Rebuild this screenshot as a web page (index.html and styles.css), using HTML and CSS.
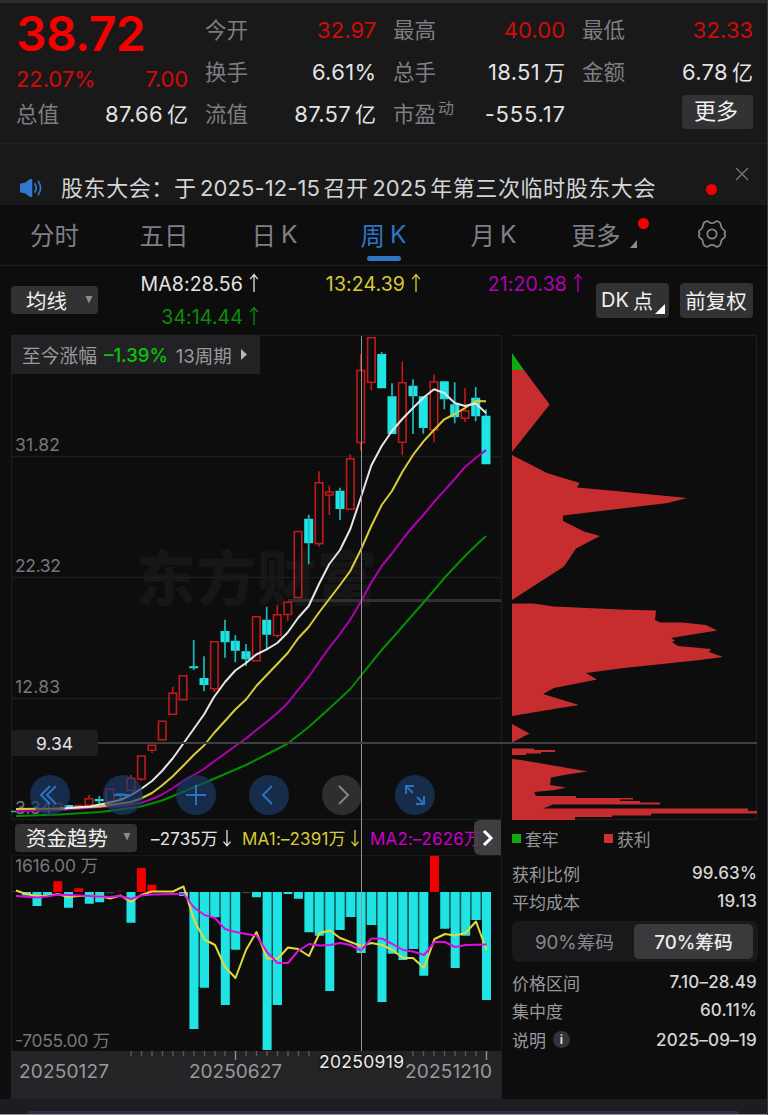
FILE: index.html
```html
<!DOCTYPE html>
<html lang="zh-CN">
<head>
<meta charset="utf-8">
<title>周K</title>
<link rel="stylesheet" href="styles.css">
</head>
<body>
<svg class="defs" width="0" height="0">
  <symbol id="up" viewBox="0 0 10 20"><path d="M5 19V2M1.2 6.2L5 1.6L8.8 6.2" fill="none" stroke="currentColor" stroke-width="1.3"/></symbol>
  <symbol id="down" viewBox="0 0 10 20"><path d="M5 2V17.500M1.5 13.6L5 17.800L8.500 13.6" fill="none" stroke="currentColor" stroke-width="1.3"/></symbol>
</svg>
<div class="app">
  <header class="quote">
    <div class="col first">
      <div class="price">38.72</div>
      <div class="row chg"><span class="red">22.07%</span><span class="red">7.00</span></div>
      <div class="row"><span class="k">总值</span><span class="v">87.66<i>亿</i></span></div>
    </div>
    <div class="col">
      <div class="row"><span class="k">今开</span><span class="v red">32.97</span></div>
      <div class="row"><span class="k">换手</span><span class="v">6.61%</span></div>
      <div class="row"><span class="k">流值</span><span class="v">87.57<i>亿</i></span></div>
    </div>
    <div class="col">
      <div class="row"><span class="k">最高</span><span class="v red">40.00</span></div>
      <div class="row"><span class="k">总手</span><span class="v">18.51<i>万</i></span></div>
      <div class="row"><span class="k">市盈<sup>动</sup></span><span class="v wide">-555.17</span></div>
    </div>
    <div class="col">
      <div class="row"><span class="k">最低</span><span class="v red">32.33</span></div>
      <div class="row"><span class="k">金额</span><span class="v">6.78<i>亿</i></span></div>
      <div class="row end"><span class="btn more">更多</span></div>
    </div>
  </header>

  <section class="notice">
    <svg class="speaker" width="24" height="20" viewBox="0 0 24 20"><path d="M1 6.5Q1 5.5 2 5.3L5.500 5L11 1.300Q13.300 0 13.300 2.500V17.500Q13.300 20 11 18.700L5.500 15L2 14.700Q1 14.500 1 13.500Z" fill="#2f78cd"/><path d="M16 6Q18.400 10 16 14M19.400 3.500Q23.800 10 19.400 16.500" fill="none" stroke="#2f78cd" stroke-width="1.700" stroke-linecap="round"/></svg>
    <p>股东大会：于<b>2025-12-15</b>召开<b>2025</b>年第三次临时股东大会</p>
    <span class="dot"></span>
    <svg class="close" width="14" height="14" viewBox="0 0 14 14"><path d="M1 1L13 13M13 1L1 13" stroke="#77777b" stroke-width="1.300"/></svg>
  </section>

  <nav class="tabs">
    <span>分时</span><span>五日</span><span>日<b>K</b></span><span class="on">周<b>K</b></span><span>月<b>K</b></span>
    <span class="drop">更多<svg width="7" height="8" viewBox="0 0 7 8"><path d="M7 0V8H0Z" fill="#8a8a90"/></svg><em></em></span>
    <span class="gear"><svg width="30" height="30" viewBox="-15 -15 30 30" fill="none" stroke="#85858b" stroke-width="1.700"><circle r="4.700"/><path d="M-6.500 -12.300Q-4.500 -13.500 -3 -11.800Q0 -9.800 3 -11.800Q4.500 -13.500 6.500 -12.300Q9 -11 8.900 -8.700Q9.200 -5.200 11.900 -4Q13.500 -2.800 13.200 -1.500Q11.500 0 13.200 1.500Q13.500 2.800 11.900 4Q9.200 5.200 8.900 8.700Q9 11 6.500 12.300Q4.500 13.500 3 11.800Q0 9.800 -3 11.800Q-4.500 13.500 -6.500 12.300Q-9 11 -8.900 8.700Q-9.200 5.200 -11.900 4Q-13.500 2.800 -13.200 1.500Q-11.500 0 -13.200 -1.500Q-13.500 -2.800 -11.900 -4Q-9.200 -5.200 -8.900 -8.700Q-9 -11 -6.500 -12.300Z"/></svg></span>
  </nav>

  <section class="controls">
    <span class="btn avg">均线<svg width="8" height="8" viewBox="0 0 8 8"><path d="M0.500 0H7.500L4 7.500Z" fill="#8d8d92"/></svg></span>
    <div class="mas">
      <span class="w">MA8:28.56<svg><use href="#up"/></svg></span>
      <span class="y">13:24.39<svg><use href="#up"/></svg></span>
      <span class="m">21:20.38<svg><use href="#up"/></svg></span>
      <span class="g">34:14.44<svg><use href="#up"/></svg></span>
    </div>
    <span class="btn dk">DK<i>点</i><svg width="10" height="10" viewBox="0 0 10 10"><path d="M10 0V10H0Z" fill="#fff"/></svg></span>
    <span class="btn fq">前复权</span>
  </section>

  <main class="board">
    <div class="left">
      <div class="kchart">
        <svg width="491" height="486" viewBox="11 334 491 486">
          <text x="136" y="601" class="mark" textLength="241">东方财富</text>
          <path d="M11 335.500H502M11.500 335V820M11 456.500H501M11 577.500H501M11 698.500H501M11 819.500H501M501.500 335V820" stroke="#1d1d1f" fill="none" stroke-width="1.500"/>
          <path d="M288 600.500H501" stroke="#303031" stroke-width="3"/>
          <g class="axis"><text x="15" y="451" textLength="45">31.82</text><text x="15" y="572" textLength="46">22.32</text><text x="15" y="693" textLength="45">12.83</text><text x="15" y="814" textLength="37">3.34</text></g>
          <g class="rise">
            <path d="M54 803.500h7.500v4.500h-7.500zM75 805.500h7.500v1.500h-7.500zM85.300 798.800h7.500v6.500h-7.500zM89 794.700v4M106.200 789.200h7.500v12h-7.500zM127.200 778.200h7.500v12.300h-7.500zM131 775v3M137.600 756h7.500v23h-7.500zM141.300 779v2M148.200 745.200h7.500v5h-7.500zM152 750v3M158.500 721.200h7.500v18.500h-7.500zM169 693.200h7.500v21h-7.500zM172.700 686.700v6M179.300 675.800h7.500v24h-7.500zM210.600 641.800h7.500v47h-7.500zM214.300 689v3M252.600 616.800h7.500v44h-7.500zM273.500 614.800h7.500v20.700h-7.500zM277.300 604.700v10M277.300 635.500v2M284 602.200h7.500v12.300h-7.500zM287.700 614.500v6.200"/>
            <path d="M294.300 531.500h7.500v66h-7.500zM315.300 482.800h7.500v60.800h-7.500zM319 471.300v11M319 543.600v3M325.600 492h7.500v3h-7.500zM329.300 485.700v6M329.300 495v20M346.600 458.800h7.500v50.400h-7.500zM350.300 454.300v4M357 370.500h7.500v72h-7.500zM360.700 354v16.500M360.700 442.500v8M367.600 337.800h7.500v44.400h-7.500zM371.300 382v8M398.600 382.800h7.500v59.400h-7.500zM402.300 361.700v21M402.300 442v13.300M430.200 382h7.500v48h-7.500zM434 374.700v7M434 430v12.300M461.300 410.800h7.500v7.500h-7.500zM465 388v22.500M465 418.300v3.700"/>
          </g>
          <path class="fallbody" d="M64 805h9v2.700h-9zM94.800 799h9v2.300h-9zM115.800 793.300h9v2.400h-9zM189.200 666.300h9v2h-9zM199.500 678h9v7h-9zM220.500 631h9v11.300h-9zM230.800 640.700h9v10h-9zM241.500 651.300h9v8h-9zM262.200 619.700h9v15h-9zM304.200 518.700h9v24.600h-9zM335.500 490.700h9v18.300h-9zM377.200 354h9v34.200h-9zM387.500 396.300h9v37.700h-9zM408.500 385.700h9v10.600h-9zM418.800 396.300h9v31.700h-9zM439.800 381.300h9v18h-9zM450.200 404.300h9v13h-9zM471.200 397.700h9v18.600h-9zM481.500 415.700h9v48.600h-9z"/>
          <path class="fallwick" d="M11 811.500H18M99.300 796v8M120.300 793v7.700M193.700 640v30M204 656.300v35M225 619.700v38M235.300 635.300v27M246 644v22M266.700 606.700v42.600M308.700 514.700v49.600M340 487.700v32.300M381.700 352v3M392 383.300v14M413 379.300v54.700M423.300 427v6.700M444.300 398v11.300M454.700 382.300v41M475.700 387v34.300M486 409.300v7"/>
          <g class="lines">
            <polyline stroke="#029002" points="16,816 60,814.500 100,812 120,809.500 141,806.500 162,800.500 183,792 204,783 225,774 246,765 266.700,754.500 287.700,743.500 308.700,727 329.300,708.500 350.300,689 360.700,676 381.700,650 392,638.500 413,614.500 426.700,599 444.300,578 465,556 475.700,545.500 486,536"/>
            <polyline stroke="#b000b0" points="16,811 60,810 100,807 120,806 141,803 152,799 162,794.500 173,788 183,781 193.700,775 204,769 214,761.500 225,753.500 235.300,746 246,738.500 256.300,730 266.700,722 277.300,713 287.700,703 298,690 308.700,677 319,662 329.300,647.700 340,634 350.300,619.500 360.700,602 371.300,582.500 381.700,566 392,553.500 402.300,539.700 413,526.500 423.300,515 434,502 444.300,490.700 454.700,479 465,467 475.700,458 486,450"/>
            <polyline stroke="#d9cc38" points="16,809 60,808.500 100,806.500 120,803.500 131,802 141,798.500 152,793 162,785.500 173,776 183,766 193.700,755 204,745.500 214,733 225,721 235.300,709.500 246,699.500 256.300,686 266.700,675 277.300,664 287.700,653 298,638.500 308.700,627 319,612.500 329.300,599 340,585 350.300,571 360.700,550 371.300,526 381.700,505 392,491 402.300,472 413,455 423.300,441.700 434,430 444.300,419.300 454.700,414 465,408 475.700,401 486,401.300"/>
            <polyline stroke="#e6e6e6" points="60,808.500 90,806.500 110,802.500 120,800 131,795 141,789 152,781 162,771 173,758 183,744 193.700,729 204,714.500 214,697 225,682 235.300,670.500 246,663 256.300,654.500 266.700,649.300 277.300,643 287.700,632.500 298,618 308.700,606 319,584 329.300,564 340,550 350.300,529 360.700,498 371.300,465.500 381.700,446 392,431 402.300,419 413,408 423.300,397.700 434,389.300 444.300,393 454.700,403 465,406 475.700,403.500 486,413"/>
          </g>
        </svg>
        <div class="since">至今涨幅<b>–1.39%</b><span>13周期</span><svg width="6" height="11" viewBox="0 0 6 11"><path d="M0 0L6 5.500L0 11Z" fill="#b5b5b8"/></svg></div>
        <div class="tools">
          <span><svg viewBox="-20 -20 40 40"><path d="M0 -9L-9 0L0 9M6 -9L-3 0L6 9"/></svg></span>
          <span><svg viewBox="-20 -20 40 40"><path d="M-9 0H9"/></svg></span>
          <span><svg viewBox="-20 -20 40 40"><path d="M-10 0H10M0 -10V10"/></svg></span>
          <span><svg viewBox="-20 -20 40 40"><path d="M3 -9L-6 0L3 9"/></svg></span>
          <span class="off"><svg viewBox="-20 -20 40 40"><path d="M-3 -9L6 0L-3 9"/></svg></span>
          <span><svg viewBox="-20 -20 40 40"><path d="M-9 -1V-9H-1M-9 -9L-2 -2M9 1V9H1M9 9L2 2"/></svg></span>
        </div>
      </div>
      <div class="flow">
        <span class="btn trend">资金趋势<svg width="8" height="8" viewBox="0 0 8 8"><path d="M0.500 0H7.500L4 7.500Z" fill="#8d8d92"/></svg></span>
        <span class="w f1">–2735万<svg><use href="#down"/></svg></span>
        <span class="y f2">MA1:–2391万<svg><use href="#down"/></svg></span>
        <span class="m f3">MA2:–2626万<svg><use href="#down"/></svg></span>
        <span class="next"><svg width="12" height="18" viewBox="0 0 12 18"><path d="M2 2L9 9L2 16" fill="none" stroke="#fff" stroke-width="3"/></svg></span>
      </div>
      <svg class="volume" width="491" height="196" viewBox="11 855 491 196">
        <path d="M11 855H502M11.500 855V1051M501.500 855V1051" stroke="#1d1d1f" fill="none" stroke-width="1.500"/>
        <path d="M12 891h8v1h-8zM116.500 890.500h8v1h-8z" fill="#7c0909"/>
        <path d="M53.300 881.300h9V892h-9zM74.200 888.300h9V892h-9zM136.900 868h9V892h-9zM147.400 884.700h9V892h-9zM430 855.700h9V892h-9z" fill="#f00000"/>
        <path d="M106 892h8v1.300h-8zM242 892h8v1.300h-8zM198 892h2v95h-2zM209 892h2v25h-2zM219 892h2v25h-2zM230 892h2v57h-2zM271.400 892h2v113h-2zM313.400 892h2v40h-2zM323.800 892h2v43h-2zM334.200 892h2v38h-2zM344.700 892h2v25h-2zM355.100 892h2v25h-2zM365.500 892h2v33h-2zM376 892h2v33h-2zM386.400 892h2v61h-2zM397 892h2v61h-2zM407.400 892h2v57h-2zM417.800 892h2v57h-2zM449 892h2v36h-2zM459.500 892h2v43h-2zM470 892h2v28h-2zM480.400 892h2v28h-2z" fill="#0e5557"/>
        <path d="M22 892h9v3.500h-9zM32.500 892h9V906h-9zM43 892h9v3h-9zM64 892h9V907.700h-9zM84.800 892h9V903.700h-9zM95.200 892h9V902.300h-9zM126.500 892h9V922.700h-9zM179 892h9V896h-9zM189.400 892h9V1029h-9zM200 892h9V987.700h-9zM210.300 892h9V917.300h-9zM220.800 892h9V1005h-9zM231.200 892h9V949.700h-9zM252 892h9V897.300h-9zM262.600 892h9V1050h-9zM273 892h9V1005h-9zM283.500 892h9V894h-9zM293.900 892h9V898.700h-9zM304.400 892h9V932.300h-9zM314.800 892h9V935.700h-9zM325.300 892h9V991h-9zM335.700 892h9V930h-9zM346.200 892h9V917h-9zM356.600 892h9V953h-9zM367 892h9V925h-9zM377.500 892h9V1002h-9zM388 892h9V953.700h-9zM398.400 892h9V960h-9zM408.900 892h9V949h-9zM419.300 892h9V975.700h-9zM440.200 892h9V928.700h-9zM450.700 892h9V968h-9zM461.200 892h9V935.700h-9zM471.600 892h9V920h-9zM482 892h9V1000h-9z" fill="#20e4e4"/>
        <g class="lines">
          <polyline stroke="#e0da3c" points="16,890.500 26,894 37,896 47,896 58,894 68,897 79,896 89,896 100,896 110,898.500 120.500,895.500 131,902 141,895 152,891.500 162,891.500 173,891.500 183.500,886.500 194,920 204.500,939.500 215,945 225,967 235.500,978 246,950 256.500,932 267,958.500 277.500,959 288,947.500 298,949 309,956 319.500,933 330,930.500 340,938 350.500,942 361,946 371.500,943 382,945 392.500,950 403,958 413,958 424,968 434.500,939 445,934 455,935.500 465.500,933 476,921.500 486.500,950"/>
          <polyline stroke="#db10e0" points="16,896 37,897.500 47,896.500 58,894.500 79,895.500 110,897 120,896 131,899 141,895.500 152,894.500 173,894 183.500,894 194,907.500 204.500,915 215,918 225,929 235.500,932 246,934 256.500,935.500 267,952 277.500,963 288,963 298,951 309,944 319.500,945.500 330,945 340,943 350.500,945 361,950.500 371.500,938.500 382,938.500 392.500,944 403,950 413,951.500 424,955 434.500,942 445,942 455,947 465.500,945 486.500,944.500"/>
        </g>
        <g class="axis"><text x="15" y="872" textLength="83">1616.00 万</text><text x="15" y="1047" textLength="95">-7055.00 万</text></g>
      </svg>
      <svg class="dates" width="491" height="48" viewBox="11 1051 491 48">
        <path d="M131 1051v5M141.500 1051v5M152 1051v5M162.500 1051v5M173 1051v5M183.500 1051v5M194 1051v5M204.500 1051v5M215 1051v5M225 1051v5M246 1051v5M256.500 1051v5M267 1051v5M277.500 1051v5M288 1051v5M298.500 1051v5M309 1051v5M413 1051v5M423.500 1051v5M434 1051v5M444.500 1051v5M455 1051v5M465.500 1051v5M476 1051v5" stroke="#5b5b5e" stroke-width="1.300"/>
        <path d="M235.500 1051v9M486.500 1051v9" stroke="#8b8b8e" stroke-width="1.500"/>
        <g><text x="19" y="1078" textLength="90">20250127</text><text x="189" y="1078" textLength="93">20250627</text><text x="405" y="1078" textLength="87">20251210</text></g>
        <text x="319" y="1068" textLength="85" class="now">20250919</text>
      </svg>
    </div>

    <aside class="chips">
      <svg width="247" height="486" viewBox="511 334 247 486">
        <path d="M511 335.500H757.500M756.500 335V820M511 819.500H757" stroke="#1d1d1f" fill="none" stroke-width="1.500"/>
        <path d="M512 353L524 370H512Z" fill="#12a812"/>
        <path d="M512 370H524L549.700 404.500L512 452ZM512 455L547 473L579.500 483L577 487.500L605 490L687 498L668 503L563 515.500V521L584 531.500L600 536L576 548.500L564 566.500L512 600ZM512 603.500H533L554 606.500L620 609.500L656 610.500L655 620L660 622.500H682L706 625L717 630.500L671 638L675 640.500L672 642L678 646L711 649L709 652L723 657L700 660L662 664L624 668L586 673L597 679.500L554 688L543 694L579 705L560 708L512 716ZM512 724L529.500 733.500L512 742.500ZM512 748.500H534V750H555V752H541V753.500H526V755H512ZM512 759L521 760L588 771.500L570 774L551 777.500L550 785L566 787.500L555 790L534 792L536 796H576V798H633V799.500H620V801H640V802.500H660V804.500H553L543 808.500H748V811H757V813.500H651V815.500H612V817H575V820H512Z" fill="#c72d2f"/>
      </svg>
      <div class="legend"><span><i class="lg"></i>套牢</span><span><i class="lr"></i>获利</span></div>
      <dl class="stats">
        <div><dt>获利比例</dt><dd>99.63%</dd></div>
        <div><dt>平均成本</dt><dd>19.13</dd></div>
      </dl>
      <div class="seg"><span>90%筹码</span><span class="on">70%筹码</span></div>
      <dl class="stats two">
        <div><dt>价格区间</dt><dd>7.10–28.49</dd></div>
        <div><dt>集中度</dt><dd>60.11%</dd></div>
        <div><dt>说明<em>i</em></dt><dd>2025–09–19</dd></div>
      </dl>
    </aside>
    <div class="vline"></div>
    <div class="hline"><span>9.34</span></div>
  </main>
  <footer class="foot"><div></div></footer>
</div>
</body>
</html>
```

FILE: styles.css
```css
* { box-sizing: border-box; }
body { margin: 0; background: #0d0d0d; }
i, em, b { font-style: normal; font-weight: inherit; }
.defs { position: absolute; }
.app {
  width: 768px; height: 1115px; overflow: hidden;
  display: flex; flex-direction: column;
  font-family: Inter, "Noto Sans CJK SC", sans-serif;
  color: #e3e3e5; background: #0d0d0d;
  border-right: 1px solid #3a3a3c;
}
.quote {
  flex: none; height: 144px; padding: 6px 15px 0 16px;
  display: grid; grid-template-columns: 172px 171px 172px 171px; column-gap: 17px;
  background: #191919; border-top: 3px solid #2b2b2b; border-bottom: 1px solid #222224;
}
.row { height: 42px; display: flex; justify-content: space-between; align-items: center; font-size: 22px; line-height: 42px; white-space: nowrap; }
.price { height: 50px; line-height: 50px; font-size: 48px; font-weight: 600; color: #f60000; letter-spacing: -.6px; }
.chg { height: 34px; line-height: 42px; padding-top: 5px; }
.chg span { letter-spacing: -.1px; }
.red { color: #d30a0a; }
.k { color: #7d7d84; font-size: 21.5px; }
.v { letter-spacing: .3px; margin-right: -.3px; }
.v.red { letter-spacing: .1px; }
.v.wide { letter-spacing: .8px; margin-right: -.8px; }
.v i { font-size: 21px; margin-left: 4px; }
.k sup { font-size: 16px; line-height: 0; vertical-align: 8px; margin-left: 2px; }
.end { justify-content: flex-end; }
.btn { background: #323232; border-radius: 4px; display: flex; align-items: center; color: #efefef; white-space: nowrap; }
.more { width: 71px; height: 34px; justify-content: center; font-size: 22px; margin-top: -4px; padding: 0 3px 2px 0; }

.notice { flex: none; position: relative; height: 61px; background: #191919; padding: 24px 0 0 19px; display: flex; align-items: center; }
.notice p { margin: 3px 0 0 18px; font-size: 22px; line-height: 36px; letter-spacing: .58px; white-space: nowrap; color: #d4d4d6; }
.notice p b { margin: 0 3.500px; letter-spacing: .1px; }
.speaker { margin-top: 3px; }
.dot { position: absolute; left: 706px; top: 40px; width: 11px; height: 11px; border-radius: 50%; background: #f00000; }
.close { position: absolute; left: 735px; top: 23px; }

.tabs { flex: none; height: 61px; display: grid; grid-template-columns: 109px 110px 111px 107px 113px 107px 110px; border-bottom: 1px solid #1e1e20; color: #7f7f86; font-size: 24.500px; }
.tabs span { position: relative; display: flex; justify-content: center; align-items: center; padding-bottom: 2px; }
.tabs b { margin-left: 5px; }
.tabs .on { color: #2f74c6; }
.tabs .on::after { content: ""; position: absolute; bottom: 4px; width: 34px; height: 5px; border-radius: 3px; background: #2f74c6; }
.tabs .drop { padding-right: 6px; }
.tabs .drop svg { margin: 20px -7px 0 9px; }
.tabs .drop em { position: absolute; right: 8px; top: 13px; width: 11px; height: 11px; border-radius: 50%; background: #fa0000; }

.controls { flex: none; height: 68px; display: flex; padding: 0 14px 0 11px; }
.avg { width: 87px; height: 28px; margin-top: 20px; padding: 0 0 1px 15px; font-size: 20.500px; }
.avg svg { margin-left: 18px; margin-top: 1px; }
.mas { width: 486px; display: grid; grid-template-columns: 162px 162px 162px; grid-template-rows: 33px 33px; padding-top: 1px; }
.mas span { display: flex; justify-content: flex-end; align-items: center; font-size: 19.500px; padding-right: 1px; letter-spacing: .1px; }
.mas svg, .flow span > svg { width: 10px; height: 20px; }
.mas svg { margin-left: 6px; margin-top: -2px; }
.w { color: #e4e4e4; } .y { color: #d8cb35; } .m { color: #b500b5; } .g { color: #0a8e0a; }
.dk { width: 73px; height: 35px; margin: 17px 0 0 12px; padding: 0 0 1px 5px; font-size: 20px; }
.dk i { margin-left: 4px; }
.dk svg { margin: 18px 0 0 2px; }
.fq { width: 73px; height: 35px; margin: 17px 0 0 11px; justify-content: center; font-size: 20.500px; padding: 0 1px 2px 0; }

.board { flex: none; position: relative; height: 765px; display: flex; padding-left: 11px; }
.board svg { display: block; }
.left { width: 491px; }
.kchart { position: relative; height: 486px; }
.mark { font: 900 60px "Noto Sans CJK SC", sans-serif; fill: #161616; }
.axis text { font-size: 17.500px; fill: #76767c; }
.rise path { fill: none; stroke: #c21a1a; stroke-width: 1.600; }
.fallbody { fill: #20e4e4; }
.fallwick { fill: none; stroke: #20b9ba; stroke-width: 1.700; }
.lines polyline { fill: none; stroke-width: 2; stroke-linejoin: round; }
.since { position: absolute; left: 0; top: 1px; width: 249px; height: 39px; padding-left: 11px; background: #222224; display: flex; align-items: center; font-size: 18.800px; color: #99999d; white-space: nowrap; }
.since b { color: #08c408; font-weight: 500; font-size: 18.500px; margin: 0 8px 0 7px; letter-spacing: 0; }
.since span { font-size: 18.500px; }
.since svg { margin-left: 9px; }
.tools { position: absolute; left: 19px; top: 441px; display: flex; gap: 33px; }
.tools span { width: 40px; height: 40px; border-radius: 50%; background: rgba(28,60,104,.67); }
.tools .off { background: rgba(58,58,61,.75); }
.tools path { fill: none; stroke: #2d70c0; stroke-width: 2; }
.tools .off path { stroke: #858587; }

.flow { position: relative; height: 35px; display: flex; align-items: center; padding-left: 4px; font-size: 17px; overflow: hidden; }
.flow > span { white-space: nowrap; flex: none; display: flex; align-items: center; }
.trend { width: 122px; height: 28px; padding: 0 0 1px 11px; font-size: 20.500px; }
.flow .trend svg { width: 8px; height: 8px; margin-left: 15px; }
.flow span.w { margin-left: 14px; width: 91px; letter-spacing: .15px; }
.flow span.y { width: 128px; letter-spacing: .15px; }
.flow span.m { color: #cc00cc; letter-spacing: .15px; }
.flow .w svg, .flow .y svg, .flow .m svg { margin-left: 4px; }
.next { position: absolute; right: 1px; top: 0; width: 27px; height: 35px; border-radius: 6px 0 0 6px; background: rgba(70,70,72,.88); justify-content: center; }
.flow .next svg { width: 12px; height: 18px; }
.dates { background: #242426; }
.dates text { font-size: 19px; fill: #99999c; }
.dates .now { font-size: 17.500px; fill: #ececec; stroke: #18181a; stroke-width: 3px; paint-order: stroke; }

.chips { width: 247px; margin-left: 9px; }
.legend { height: 37px; display: flex; padding: 0 0 0 1px; font-size: 16.800px; color: #929297; }
.legend span { width: 92px; display: flex; align-items: center; }
.legend i { width: 9px; height: 9px; margin-right: 4px; }
.lg { background: #12a812; } .lr { background: #cf3032; }
.stats { margin: 0; padding: 2px 1px 0; font-size: 17px; }
.stats div { height: 28px; display: flex; justify-content: space-between; align-items: center; }
.stats dt { color: #98989c; display: flex; align-items: center; }
.stats dd { margin: 0; color: #d6d6d8; font-weight: 500; letter-spacing: .2px; }
.seg { margin: 6px 0 0 1px; height: 41px; padding: 3px; border-radius: 7px; background: #19191b; display: flex; color: #88888d; }
.seg span { width: 119px; display: flex; align-items: center; justify-content: center; font-size: 18.700px; padding-bottom: 2px; }
.seg .on { background: #3a3a3c; color: #ededed; font-weight: 500; border-radius: 5px; }
.two { padding-top: 6px; }
.two div:last-child { height: 31px; }
.stats em { width: 17px; height: 17px; border-radius: 50%; background: #343436; color: #ddd; font-size: 12px; font-weight: 700; line-height: 17px; text-align: center; margin-left: 7px; }

.vline { position: absolute; left: 361px; top: 2px; width: 1px; height: 715px; background: #959595; }
.hline { position: absolute; left: 11px; top: 396px; width: 746px; height: 26px; display: flex; align-items: center; }
.hline::after { content: ""; flex: 1; height: 2px; background: #3f3f41; }
.hline span { width: 87px; height: 26px; background: #1e1e20; border-radius: 3px; font-size: 17.500px; line-height: 27px; text-align: center; }
.foot { flex: none; height: 16px; background: #1d1c22; padding: 12px 28px 0 27px; border-bottom: 1px solid #909094; }
.foot div { height: 3px; background: #2e2d50; border-radius: 3px 3px 0 0; }
```
